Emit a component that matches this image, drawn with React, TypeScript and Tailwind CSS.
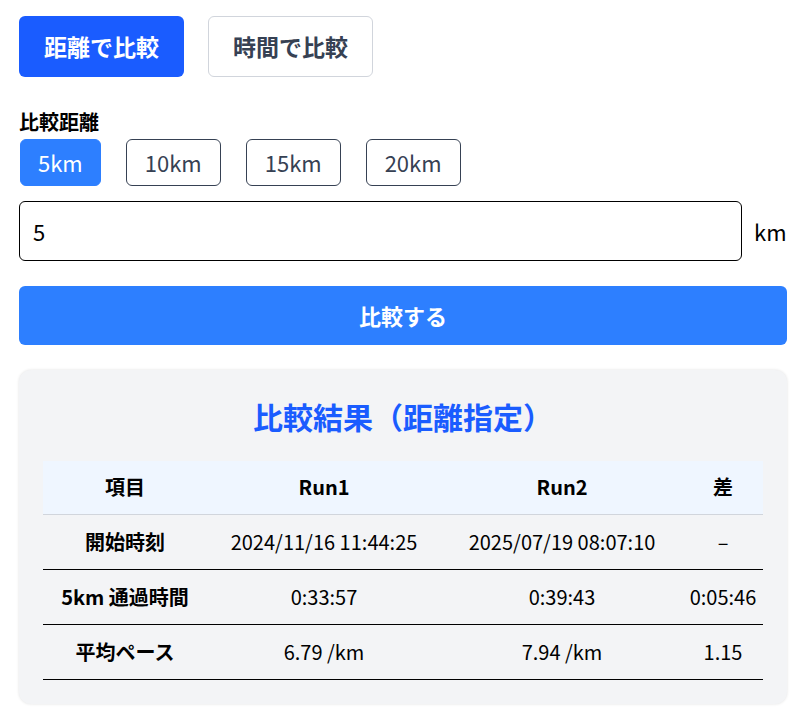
import { useState } from "react"

type Row = {
  label: string
  run1: string
  run2: string
  diff: string
}

const rows: Row[] = [
  { label: "開始時刻", run1: "2024/11/16 11:44:25", run2: "2025/07/19 08:07:10", diff: "–" },
  { label: "5km 通過時間", run1: "0:33:57", run2: "0:39:43", diff: "0:05:46" },
  { label: "平均ペース", run1: "6.79 /km", run2: "7.94 /km", diff: "1.15" },
]

const presets = [5, 10, 15, 20]

export default function App() {
  const [mode, setMode] = useState<"distance" | "time">("distance")
  const [distance, setDistance] = useState("5")

  return (
    <main
      className="min-h-screen bg-white pt-4 pr-[24px] pb-4 pl-[19px] text-black"
      style={{ fontFamily: '"Noto Sans CJK JP", "Noto Sans", sans-serif' }}
    >
      {/* MODE TABS */}
      <div className="flex gap-6">
        <button
          onClick={() => setMode("distance")}
          className={
            mode === "distance"
              ? "h-[61px] w-[165px] rounded-md bg-[#1a5cff] text-[23px] font-bold text-white"
              : "h-[61px] w-[165px] rounded-md border border-gray-300 bg-white text-[23px] font-bold text-gray-700"
          }
        >
          距離で比較
        </button>
        <button
          onClick={() => setMode("time")}
          className={
            mode === "time"
              ? "h-[61px] w-[165px] rounded-md bg-[#1a5cff] text-[23px] font-bold text-white"
              : "h-[61px] w-[165px] rounded-md border border-gray-300 bg-white text-[23px] font-bold text-gray-700"
          }
        >
          時間で比較
        </button>
      </div>

      {/* DISTANCE */}
      <div className="mt-[31px] text-[20px] leading-[28px] font-bold">比較距離</div>
      <div className="mt-[3px] ml-[1px] flex gap-[25px]">
        {presets.map((p) => (
          <button
            key={p}
            onClick={() => setDistance(String(p))}
            className={
              distance === String(p)
                ? "h-[47px] rounded-md border border-[#2d7fff] bg-[#2d7fff] px-[17px] text-[22px] text-white"
                : "h-[47px] rounded-md border border-gray-700 bg-white px-[18px] text-[22px] text-gray-700"
            }
          >
            {p}km
          </button>
        ))}
      </div>

      <div className="mt-[15px] flex items-center gap-3">
        <input
          value={distance}
          onChange={(e) => setDistance(e.target.value)}
          className="h-[60px] w-[723px] rounded-md border border-black px-[13px] text-[22px] outline-none"
        />
        <span className="text-[22px]">km</span>
      </div>

      <button className="mt-[25px] h-[59px] w-full rounded-md bg-[#2d7fff] text-[22px] font-bold text-white">
        比較する
      </button>

      {/* RESULT */}
      <div className="mt-[25px] rounded-xl bg-gray-100 px-6 pt-6 pb-6 shadow-[0_0_3px_rgba(0,0,0,0.12)]">
        <h2 className="text-center text-[30px] leading-[44px] font-bold text-[#1a5cff]">
          比較結果（距離指定）
        </h2>

        <table className="mt-[23px] w-full table-fixed border-collapse text-[20px]">
          <colgroup>
            <col className="w-[164px]" />
            <col className="w-[234px]" />
            <col className="w-[242px]" />
            <col className="w-[80px]" />
          </colgroup>
          <thead>
            <tr className="h-[53px] border-b border-gray-300 bg-blue-50 font-bold">
              <th>項目</th>
              <th>Run1</th>
              <th>Run2</th>
              <th>差</th>
            </tr>
          </thead>
          <tbody>
            {rows.map((r) => (
              <tr key={r.label} className="h-[55px] border-b border-black text-center">
                <td className="font-bold whitespace-nowrap">{r.label}</td>
                <td className="whitespace-nowrap">{r.run1}</td>
                <td className="whitespace-nowrap">{r.run2}</td>
                <td className="whitespace-nowrap">{r.diff}</td>
              </tr>
            ))}
          </tbody>
        </table>
      </div>
    </main>
  )
}
